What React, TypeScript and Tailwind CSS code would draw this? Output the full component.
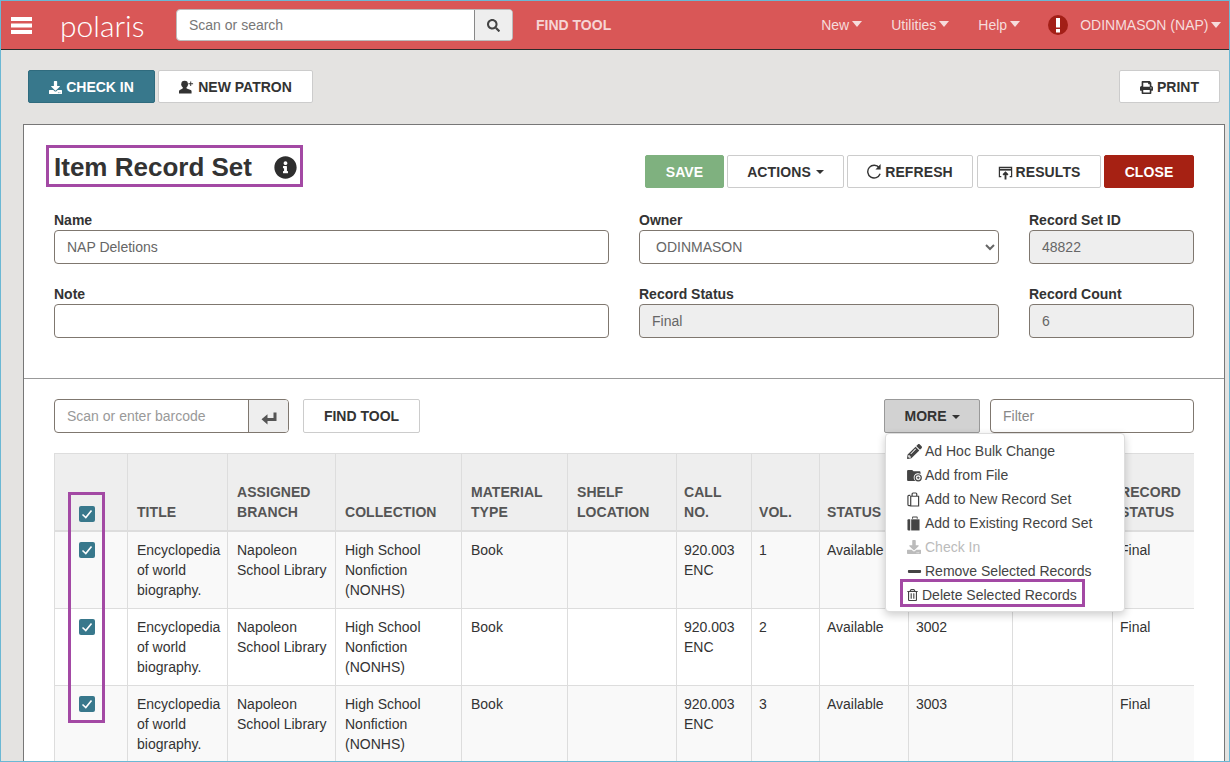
import {
  FaSearch,
  FaDownload,
  FaPrint,
  FaInfoCircle,
  FaPencilAlt,
  FaMinus,
  FaRegTrashAlt,
} from "react-icons/fa";

// the first barcode and two header labels sit under the open MORE menu, so they stay blank
const rows = [
  { vol: "1", barcode: "" },
  { vol: "2", barcode: "3002" },
  { vol: "3", barcode: "3003" },
];

const colWidths = [73, 100, 108, 126, 106, 109, 75, 68, 89, 104, 100, 120];

const headers = [
  "TITLE",
  "ASSIGNED BRANCH",
  "COLLECTION",
  "MATERIAL TYPE",
  "SHELF LOCATION",
  "CALL NO.",
  "VOL.",
  "STATUS",
  "",
  "",
  "RECORD STATUS",
];

function Caret({ className }: { className: string }) {
  return <span className={`inline-block h-0 w-0 border-x-transparent ${className}`} />;
}

function NavLink({ label, className }: { label: string; className: string }) {
  return (
    <span className={`flex items-center gap-[3px] text-[14px] text-[#f6dcdc] ${className}`}>
      {label}
      <Caret className="mt-[-2px] border-x-[5px] border-t-[6px] border-t-[#f6dcdc]" />
    </span>
  );
}

function Checkbox() {
  return (
    <div className="ml-[24px] mt-[2px] flex h-4 w-4 items-center justify-center rounded-[2px] bg-[#38788c]">
      <svg viewBox="0 0 16 16" className="h-4 w-4" fill="none" stroke="white" strokeWidth="1.600">
        <path d="M3.500 8.500 6.800 11.500 12.500 4.500" />
      </svg>
    </div>
  );
}

function Field({
  label,
  value,
  width,
  disabled,
}: {
  label: string;
  value: string;
  width: string;
  disabled?: boolean;
}) {
  return (
    <div className={width}>
      <div className="h-5 text-[14px] font-bold leading-5 text-[#333]">{label}</div>
      <div
        className={`h-[34px] rounded border border-[#7f776f] px-3 text-[14px] leading-[32px] text-[#666] ${
          disabled ? "bg-[#eeeeee]" : "bg-white"
        }`}
      >
        {value}
      </div>
    </div>
  );
}

function ActionButton({
  children,
  className,
}: {
  children: React.ReactNode;
  className: string;
}) {
  return (
    <div
      className={`flex h-[33px] items-center justify-center rounded-[2px] border pt-px text-[14px] font-bold ${className}`}
    >
      {children}
    </div>
  );
}

function MenuItem({
  icon,
  label,
  muted,
}: {
  icon: React.ReactNode;
  label: string;
  muted?: boolean;
}) {
  return (
    <div className={`flex h-6 items-center pl-[21px] text-[14px] ${muted ? "text-[#bbb]" : "text-[#444]"}`}>
      <span className="flex w-[18px] shrink-0 items-center">{icon}</span>
      {label}
    </div>
  );
}

function Cell({ wide, children }: { wide?: boolean; children?: React.ReactNode }) {
  return (
    <td className={`border border-[#ddd] py-2 pr-[6px] ${wide ? "pl-[9px]" : "pl-[7px]"}`}>{children}</td>
  );
}

export default function App() {
  return (
    <div
      className="h-[762px] w-[1230px] overflow-hidden border border-[#6bb8d4] bg-[#e4e3e1] text-[#333]"
      style={{ fontFamily: '"Liberation Sans", Arial, sans-serif' }}
    >
      {/* top bar */}
      <header className="flex h-[49px] items-center border-b border-[#2b2b2b] bg-[#d95757]">
        <svg viewBox="0 0 21 17" className="ml-[10px] h-[17px] w-[21px]" fill="white">
          <rect width="21" height="4" />
          <rect y="6.500" width="21" height="4" />
          <rect y="13" width="21" height="4" />
        </svg>
        <span
          className="ml-[28px] w-[116px] text-[30px] font-light leading-none text-white"
          style={{ fontFamily: 'Lato, "Open Sans", sans-serif' }}
        >
          polaris
        </span>
        <div className="flex h-[32px] w-[337px] overflow-hidden rounded border border-[#bbb] bg-white">
          <div className="flex-1 pl-3 text-[14px] leading-[30px] text-[#777]">Scan or search</div>
          <div className="flex w-[38px] items-center justify-center border-l border-[#888] bg-[#eee]">
            <FaSearch className="h-[13px] w-[13px] text-[#444]" />
          </div>
        </div>
        <span className="ml-[23px] text-[14px] font-bold text-[#f6d5d5]">FIND TOOL</span>
        <NavLink label="New" className="ml-[210px]" />
        <NavLink label="Utilities" className="ml-[29px]" />
        <NavLink label="Help" className="ml-[29px]" />
        <svg viewBox="0 0 20 20" className="ml-[28px] h-[20px] w-[20px]">
          <circle cx="10" cy="10" r="10" fill="#a31f17" />
          <rect x="8" y="3" width="4" height="9.500" fill="white" />
          <rect x="8" y="14" width="4" height="3.500" fill="white" />
        </svg>
        <span className="ml-[12px] flex items-center gap-[3px] text-[14px] text-[#f6dcdc]">
          ODINMASON (NAP)
          <Caret className="border-x-[5px] border-t-[6px] border-t-[#f6dcdc]" />
        </span>
      </header>

      {/* quick buttons */}
      <div className="flex pl-[27px] pr-[9px] pt-[20px]">
        <ActionButton className="w-[127px] gap-1 border-[#2f6b7e] bg-[#38788c] text-white">
          <FaDownload className="h-[13px] w-[13px]" />
          CHECK IN
        </ActionButton>
        <ActionButton className="ml-[3px] w-[155px] gap-1 border-[#ccc] bg-white text-[#333]">
          <svg viewBox="0 0 16 14" className="h-[14px] w-[15px]" fill="currentColor">
            <circle cx="6" cy="4" r="3.600" />
            <path d="M4.200 7h3.600l.4 1.600 4.300 1.600c.6.3.9.8.9 1.400V14H0v-2.400c0-.6.3-1.100.9-1.400l3-1.600z" />
            <path d="M12 1h1v2h2v1h-2v2h-1V4h-2V3h2z" />
          </svg>
          NEW PATRON
        </ActionButton>
        <ActionButton className="ml-auto w-[101px] gap-1 border-[#ccc] bg-white text-[#333]">
          <FaPrint className="h-[13px] w-[13px]" />
          PRINT
        </ActionButton>
      </div>

      {/* record set panel */}
      <main className="ml-[22px] mt-[21px] h-[700px] w-[1202px] border border-[#777] bg-white">
        <div className="px-[30px]">
          <div className="flex h-[63px] items-end">
            <div className="relative flex h-[33px] items-center">
              <h1 className="mt-[-10px] text-[26px] font-bold leading-none text-[#333]">Item Record Set</h1>
              <FaInfoCircle className="ml-[22px] mt-[-9px] h-[23px] w-[23px] text-[#2e2e2e]" />
              {/* review highlight */}
              <div className="absolute left-[-8px] top-[-10px] h-[42px] w-[257px] border-[3px] border-[#a349a4]" />
            </div>
            <div className="ml-auto flex tracking-[0.1px]">
              <ActionButton className="w-[79px] border-[#7fb17f] bg-[#7fb17f] text-white">SAVE</ActionButton>
              <ActionButton className="ml-[3px] w-[117px] gap-[5px] border-[#ccc] bg-white text-[#333]">
                ACTIONS
                <Caret className="border-x-[4px] border-t-[4px] border-t-[#333]" />
              </ActionButton>
              <ActionButton className="ml-[3px] w-[126px] gap-[3px] border-[#ccc] bg-white text-[#333]">
                <svg viewBox="0 0 16 18" className="mt-[-3px] h-[18px] w-[15px]" fill="none" stroke="currentColor">
                  <path d="M13 5.500A6.800 6.800 0 1 0 14 12" strokeWidth="1.500" />
                  <path d="M14.500 1.500v6h-5.500z" fill="currentColor" stroke="none" />
                </svg>
                REFRESH
              </ActionButton>
              <ActionButton className="ml-[4px] w-[124px] gap-[3px] border-[#ccc] bg-white text-[#333]">
                <svg viewBox="0 0 16 16" className="h-[15px] w-[15px]" fill="none" stroke="currentColor">
                  <path d="M3.500 12.500h-2v-10h13v10h-2" strokeWidth="1.300" />
                  <path d="M1.500 5h13" strokeWidth="2" />
                  <path d="M8 15.500V9M5.500 10.500 8 8l2.500 2.500" strokeWidth="2" />
                </svg>
                RESULTS
              </ActionButton>
              <ActionButton className="ml-[3px] w-[90px] border-[#a62113] bg-[#a62113] text-white">CLOSE</ActionButton>
            </div>
          </div>

          <div className="mt-[22px] flex gap-[30px]">
            <Field label="Name" value="NAP Deletions" width="w-[555px]" />
            <div className="w-[360px]">
              <div className="h-5 text-[14px] font-bold leading-5 text-[#333]">Owner</div>
              <select
                defaultValue="ODINMASON"
                className="h-[34px] w-full rounded border border-[#7f776f] bg-white px-3 text-[14px] text-[#666]"
              >
                <option>ODINMASON</option>
              </select>
            </div>
            <Field label="Record Set ID" value="48822" width="w-[165px]" disabled />
          </div>
          <div className="mt-[20px] flex gap-[30px]">
            <Field label="Note" value="" width="w-[555px]" />
            <Field label="Record Status" value="Final" width="w-[360px]" disabled />
            <Field label="Record Count" value="6" width="w-[165px]" disabled />
          </div>
        </div>

        <div className="mt-[40px] border-t border-[#999]" />

        <div className="px-[30px] pt-[20px]">
          <div className="flex h-[34px]">
            <div className="flex w-[235px] overflow-hidden rounded border border-[#7f776f]">
              <div className="flex-1 pl-3 text-[14px] leading-[32px] text-[#999]">Scan or enter barcode</div>
              <div className="flex w-[40px] items-center justify-center border-l border-[#7f776f] bg-[#eee]">
                <svg viewBox="0 0 16 14" className="mt-[4px] h-[15px] w-[16px]" fill="#555">
                  <path d="M12.500 1h3v8.500H6.500V13L.5 7.800l6-5v3.700h6z" />
                </svg>
              </div>
            </div>
            <ActionButton className="ml-[14px] h-[34px] w-[117px] border-[#ccc] bg-white text-[#333]">
              FIND TOOL
            </ActionButton>
            <div className="relative ml-auto">
              <ActionButton className="h-[34px] w-[96px] gap-[5px] border-[#999] bg-[#d2d2d2] text-[#333]">
                MORE
                <Caret className="border-x-[4px] border-t-[4px] border-t-[#333]" />
              </ActionButton>
              {/* MORE menu */}
              <div className="absolute left-[1px] top-[34px] z-10 h-[179px] w-[240px] rounded border border-[#ddd] bg-white pt-[5px] shadow-[0_3px_8px_rgba(0,0,0,0.2)]">
                <MenuItem icon={<FaPencilAlt className="h-[15px] w-[15px] text-[#444]" />} label="Ad Hoc Bulk Change" />
                <MenuItem
                  icon={
                    <svg viewBox="0 0 16 14" className="h-[13px] w-[15px]" fill="#444">
                      <path d="M0 2.500C0 1.500.5 1 1.500 1h4L7 2.500h6c1 0 1.500.5 1.500 1.500v1.500a4.500 4.500 0 0 0-5.500 7.500H1.500C.5 13 0 12.500 0 11.500z" />
                      <circle cx="12" cy="9.500" r="3.300" fill="none" stroke="#444" strokeWidth="1.300" />
                      <path d="M11.500 8h1v1h1v1h-1v1h-1v-1h-1V9h1z" />
                    </svg>
                  }
                  label="Add from File"
                />
                <MenuItem
                  icon={
                    <svg viewBox="0 0 14 16" className="h-[15px] w-[13px]" fill="none" stroke="#444" strokeWidth="1.300">
                      <path d="M3.500 14.500h-1.500c-.5 0-1-.5-1-1V4.500c0-.5.5-1 1-1h1.500M4 4.500h8.500v10.500H4zM5.500 4.500V2c0-.5.500-1 1-1h3c.5 0 1 .5 1 1v2.500" />
                    </svg>
                  }
                  label="Add to New Record Set"
                />
                <MenuItem
                  icon={
                    <svg viewBox="0 0 14 16" className="h-[15px] w-[13px]" fill="#444">
                      <path d="M1.500 3.500h2v12h-2c-.5 0-1-.5-1-1v-10c0-.5.5-1 1-1z" />
                      <path d="M4.500 3.500h9v12h-9z" />
                      <path d="M5.500 3V1.500c0-.5.5-1 1-1h4c.5 0 1 .5 1 1V3h-1V1.500h-4V3z" />
                    </svg>
                  }
                  label="Add to Existing Record Set"
                />
                <MenuItem icon={<FaDownload className="h-[14px] w-[14px] text-[#bbb]" />} label="Check In" muted />
                <MenuItem icon={<FaMinus className="h-[15px] w-[15px] text-[#444]" />} label="Remove Selected Records" />
                <div className="flex h-6 items-center pl-[21px] text-[14px] text-[#444]">
                  <FaRegTrashAlt className="mr-[4px] h-[12px] w-[11px] text-[#444]" />
                  Delete Selected Records
                </div>
                {/* review highlight */}
                <div className="absolute left-[14px] top-[145px] h-[28px] w-[185px] border-[3px] border-[#a349a4]" />
              </div>
            </div>
            <div className="ml-[10px] w-[204px] rounded border border-[#7f776f] pl-3 text-[14px] leading-[32px] text-[#888]">
              Filter
            </div>
          </div>

          <div className="relative mt-[20px] w-[1140px] overflow-hidden">
            <table className="table-fixed border-collapse text-[14px] leading-5" style={{ width: 1178 }}>
              <colgroup>
                {colWidths.map((w, i) => (
                  <col key={i} style={{ width: w }} />
                ))}
              </colgroup>
              <thead>
                <tr className="h-[77px] bg-[#eeeeee] text-left align-bottom text-[#555]">
                  <th className="border border-b-2 border-[#ddd] pb-2">
                    <Checkbox />
                  </th>
                  {headers.map((h, i) => (
                    <th
                      key={i}
                      className={`border border-b-2 border-[#ddd] pb-2 pr-[6px] font-bold tracking-[0.05px] ${
                        i < 5 ? "pl-[9px]" : "pl-[7px]"
                      }`}
                    >
                      {h}
                    </th>
                  ))}
                </tr>
              </thead>
              <tbody>
                {rows.map((r, i) => (
                  <tr key={r.vol} className={`h-[77px] align-top ${i % 2 === 0 ? "bg-[#f9f9f9]" : "bg-white"}`}>
                    <td className="border border-[#ddd] py-2">
                      <Checkbox />
                    </td>
                    <Cell wide>Encyclopedia of world biography.</Cell>
                    <Cell wide>Napoleon School Library</Cell>
                    <Cell wide>High School Nonfiction (NONHS)</Cell>
                    <Cell wide>Book</Cell>
                    <Cell wide />
                    <Cell>920.003 ENC</Cell>
                    <Cell>{r.vol}</Cell>
                    <Cell>Available</Cell>
                    <Cell>{r.barcode}</Cell>
                    <Cell />
                    <Cell>Final</Cell>
                  </tr>
                ))}
              </tbody>
            </table>
            {/* review highlight */}
            <div className="absolute left-[14px] top-[39px] h-[231px] w-[37px] border-[3px] border-[#a349a4]" />
          </div>
        </div>
      </main>
    </div>
  );
}
